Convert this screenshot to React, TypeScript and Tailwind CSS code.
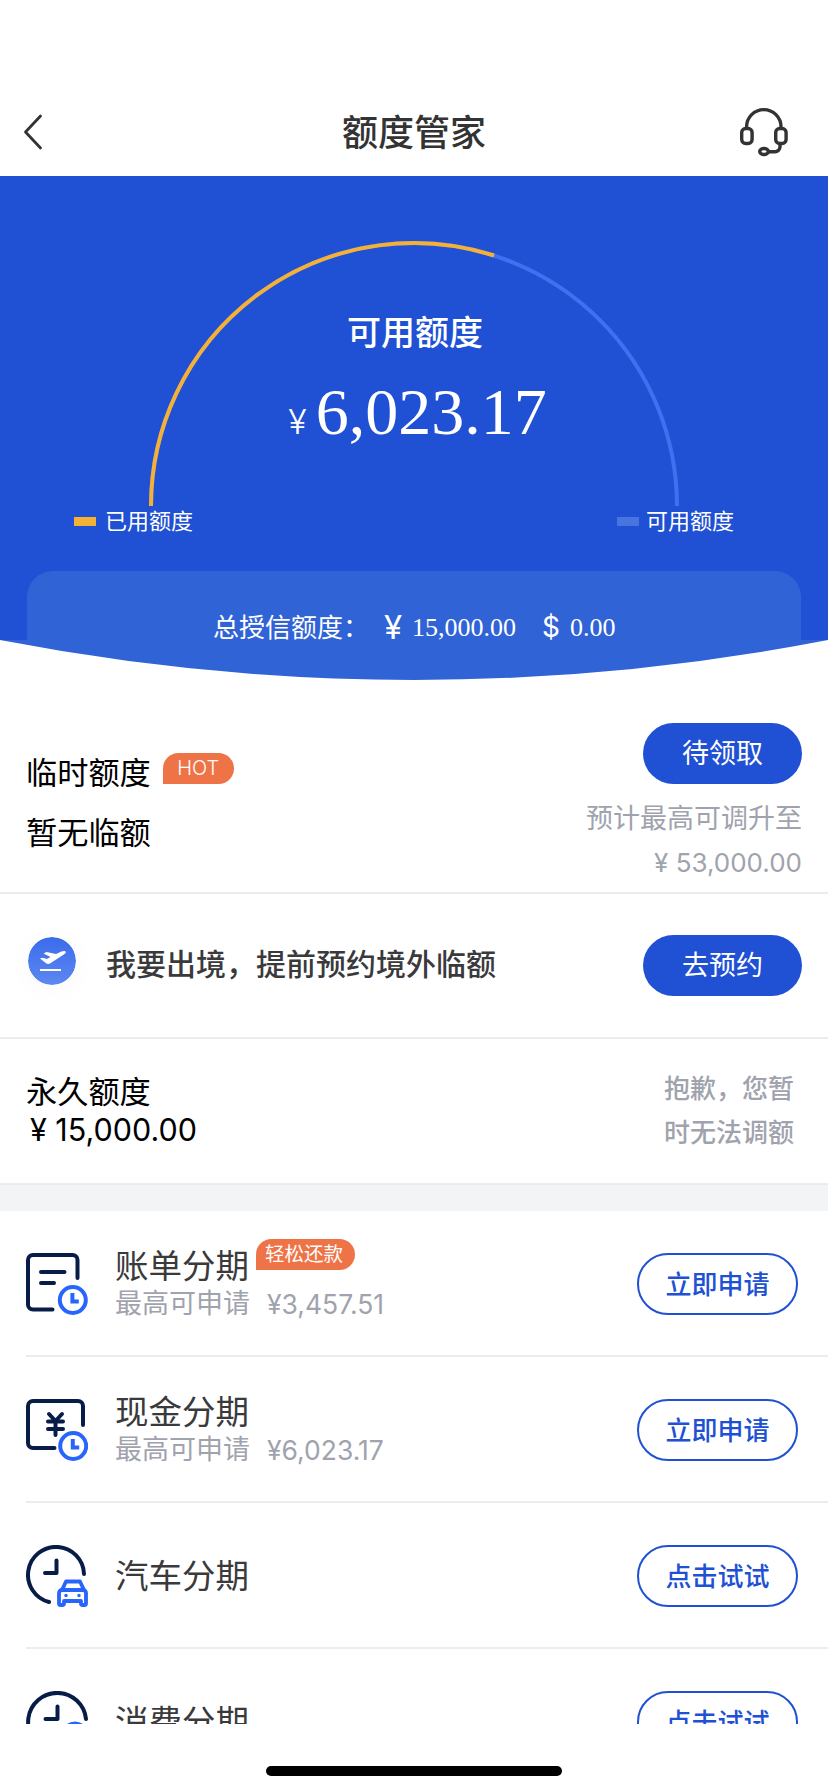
import React from 'react';

type Product = {
    name: string;
    amount?: string;
    tag?: string;
    action: string;
    icon: React.ReactNode;
};

const NAVY = '#081c48';
const BLUE = '#2865fb';

const MiniClock: React.FC<{ cx: number; cy: number }> = ({ cx, cy }) => (
    <g stroke={BLUE} strokeWidth="4" fill="none">
        <circle cx={cx} cy={cy} r="13" />
        <path d={`M${cx - 0.4} ${cy - 7}v8.4h6.4`} />
    </g>
);

const BillIcon: React.FC = () => (
    <svg className="h-[62px] w-[62px]" viewBox="0 0 62 62" fill="none">
        <g stroke={NAVY} strokeWidth="4" strokeLinecap="round" strokeLinejoin="round">
            <path d="M51.5 25V7a5 5 0 0 0-5-5H7a5 5 0 0 0-5 5v44.5a5 5 0 0 0 5 5h19.5" />
            <path d="M15 19h23.5M15 30h13" />
        </g>
        <MiniClock cx={46.8} cy={47} />
    </svg>
);

const CashIcon: React.FC = () => (
    <svg className="h-[62px] w-[62px]" viewBox="0 0 62 62" fill="none">
        <g stroke={NAVY} strokeWidth="4" strokeLinecap="round" strokeLinejoin="round">
            <path d="M57 26V7a5 5 0 0 0-5-5H7a5 5 0 0 0-5 5v37a5 5 0 0 0 5 5h21.5" />
            <path d="M23 15l6.5 7 6.5-7M22 22.5h15M22 30h15M29.500 22.5v13.5" />
        </g>
        <MiniClock cx={47.2} cy={47} />
    </svg>
);

const CarIcon: React.FC = () => (
    <svg className="h-[62px] w-[62px]" viewBox="0 0 62 62" fill="none">
        <g stroke={NAVY} strokeWidth="4" strokeLinecap="round" strokeLinejoin="round">
            <path d="M58 29A28 28 0 1 0 23 57" />
            <path d="M30.5 15.5v12.5h-11.5" />
        </g>
        <g stroke={BLUE} strokeWidth="3.8" strokeLinejoin="round">
            <path d="M36 45l4-8.500h14l4 8.500" />
            <path d="M36 45h21a3 3 0 0 1 3 3v10.500a1.500 1.500 0 0 1-1.500 1.500h-2a1.500 1.500 0 0 1-1.500-1.500v-2.500h-17v2.500a1.500 1.500 0 0 1-1.500 1.500h-2a1.500 1.500 0 0 1-1.500-1.500v-10.500a3 3 0 0 1 3-3z" />
        </g>
        <circle cx="40" cy="50.5" r="1.700" fill={BLUE} />
        <circle cx="53" cy="50.5" r="1.700" fill={BLUE} />
    </svg>
);

const ConsumeIcon: React.FC = () => (
    <svg className="h-[62px] w-[62px]" viewBox="0 0 62 62" fill="none">
        <g stroke={NAVY} strokeWidth="4" strokeLinecap="round" strokeLinejoin="round">
            <path d="M60 28A29 29 0 1 0 24 59" />
            <path d="M31.5 15.5v12.5h-12" />
        </g>
        <circle cx="49" cy="44.5" r="12" stroke={BLUE} strokeWidth="4" />
    </svg>
);

const products: Product[] = [
    { name: '账单分期', amount: '¥3,457.51', tag: '轻松还款', action: '立即申请', icon: <BillIcon /> },
    { name: '现金分期', amount: '¥6,023.17', action: '立即申请', icon: <CashIcon /> },
    { name: '汽车分期', action: '点击试试', icon: <CarIcon /> },
    { name: '消费分期', action: '点击试试', icon: <ConsumeIcon /> },
];

const Header: React.FC = () => (
    <header className="flex h-[176px] shrink-0 items-end justify-between pr-[38px] pb-[18px] pl-[22px]">
        <div className="flex h-[52px] w-[52px] items-center">
            <svg className="h-[38px] w-[22px]" viewBox="0 0 22 38" fill="none" stroke="#333" strokeWidth="2.8" strokeLinecap="round" strokeLinejoin="round">
                <path d="M18.5 3L3.500 19l15 16" />
            </svg>
        </div>
        <h1 className="-mb-px pl-4 text-[36px] leading-[52px] font-medium text-[#333]">额度管家</h1>
        <svg className="h-[52px] w-[52px]" viewBox="0 0 52 52" fill="none" stroke="#333" strokeWidth="3.4">
            <path d="M8.600 22v-1.200a17.200 17.200 0 0 1 34.400 0v1.200" />
            <rect x="3.700" y="22.500" width="10.400" height="15" rx="4" />
            <rect x="37.700" y="22.500" width="10.400" height="15" rx="4" />
            <path d="M42 38v2.700a5 5 0 0 1-5 5H30.500" />
            <ellipse cx="26" cy="45.500" rx="4.300" ry="3" />
        </svg>
    </header>
);

const QuotaPanel: React.FC = () => (
    <section className="flex h-[464px] shrink-0 flex-col bg-[#2050d3] text-white">
        <div className="relative h-[395px] shrink-0">
            <svg className="absolute inset-0 h-[395px] w-[828px]" viewBox="0 0 828 395" fill="none" strokeWidth="4">
                <path d="M151 330A263 263 0 0 1 677 330" stroke="#4070f0" />
                <path d="M151 330A263 263 0 0 1 494 79.500" stroke="#f4b136" />
            </svg>
            <div className="relative flex flex-col items-center pt-[132px]">
                <div className="pl-[2px] text-[34px] leading-[50px] font-medium">可用额度</div>
                <div className="mt-[15px] flex h-[78px] items-baseline gap-[9px] pl-[7px]">
                    <span className="font-['Inter'] text-[34px] font-light">¥</span>
                    <span className="font-['Liberation_Serif'] text-[66px] leading-[78px]">6,023.17</span>
                </div>
            </div>
            <div className="relative mt-[53px] flex h-[34px] items-center justify-between pr-[94px] pl-[74px] text-[22px] leading-[34px]">
                <div className="flex items-center gap-[9px]">
                    <i className="h-[9px] w-[22px] bg-[#f4b136]" />
                    已用额度
                </div>
                <div className="flex items-center gap-[7px]">
                    <i className="h-[9px] w-[22px] bg-[#4676dd]" />
                    可用额度
                </div>
            </div>
        </div>
        <div className="mx-[27px] flex flex-1 items-center rounded-t-[26px] bg-[#3063d6] pt-[41px] pl-[186px] text-[26px] leading-[30px] whitespace-nowrap">
            <span className="w-[171px]">总授信额度：</span>
            <span className="w-[28px] pb-[2px] font-['Inter'] text-[33px]">¥</span>
            <span className="w-[130px] font-['Liberation_Serif']">15,000.00</span>
            <span className="w-[28px] pb-[2px] font-['Inter'] text-[28px]">$</span>
            <span className="font-['Liberation_Serif']">0.00</span>
        </div>
    </section>
);

const SolidButton: React.FC<{ children: React.ReactNode }> = ({ children }) => (
    <button className="h-[61px] w-[159px] rounded-full bg-[#2050d3] pt-px text-[27px] text-white">{children}</button>
);

const ProductRow: React.FC<{ item: Product }> = ({ item }) => (
    <li className="ml-[26px] flex h-[146px] items-start border-b-2 border-[#ececec] pt-[42px] pr-[30px]">
        {item.icon}
        <div className="ml-[27px] flex-1">
            <div className={item.amount ? '-mt-1 flex h-[33px] items-center' : 'flex h-[62px] items-center'}>
                <span className="text-[33.5px] leading-[44px] text-[#3a3a3c]">{item.name}</span>
                {item.tag && (
                    <span className="mb-[22px] ml-[7px] h-[31px] w-[99px] rounded-full rounded-bl-none bg-[#ee7448] pr-[3px] text-center text-[19.5px] leading-[30px] text-white">
                        {item.tag}
                    </span>
                )}
            </div>
            {item.amount && (
                <div className="mt-[5px] flex gap-[17px] text-[27px] leading-[34px] text-[#9fa3ad]">
                    <span className="w-[135px] whitespace-nowrap">最高可申请</span>
                    <span className="text-[26.5px]">{item.amount}</span>
                </div>
            )}
        </div>
        <button className="h-[62px] w-[161px] rounded-full border-2 border-[#2050d3] text-[26px] font-medium text-[#2050d3]">
            {item.action}
        </button>
    </li>
);

export default function App() {
    return (
        <div className="flex h-[1792px] w-[828px] flex-col overflow-hidden bg-white font-['Inter','Noto_Sans_CJK_SC',sans-serif] text-black">
            <Header />
            <QuotaPanel />
            {/* curved bottom edge of the blue panel */}
            <svg className="h-[42px] w-[828px] shrink-0" viewBox="0 0 828 42">
                <path d="M0 0Q414 80 828 0z" fill="#3063d6" />
            </svg>

            <section className="flex h-[212px] shrink-0 justify-between border-b-2 border-[#ececec] px-[26px] pt-[41px]">
                <div className="pt-5 text-[31.2px] leading-[60px]">
                    <div className="flex">
                        临时额度
                        <span className="mt-[10px] ml-[12px] h-[31px] w-[71px] rounded-full rounded-bl-none bg-[#ee7448] text-center text-[20px] leading-[31px] font-light text-white">
                            HOT
                        </span>
                    </div>
                    <div>暂无临额</div>
                </div>
                <div className="flex flex-col items-end">
                    <SolidButton>待领取</SolidButton>
                    <p className="mt-[13px] text-right text-[27px] leading-[44px] text-[#9fa3ad]">
                        预计最高可调升至
                        <br />
                        <span className="text-[26px]">¥ 53,000.00</span>
                    </p>
                </div>
            </section>

            <section className="flex h-[145px] shrink-0 items-start border-b-2 border-[#ececec] px-[26px] pt-[41px]">
                <svg className="mt-[2px] ml-[2px] h-[48px] w-[48px] rounded-full shadow-[0_4px_28px_rgba(0,0,0,0.03)]" viewBox="0 0 48 48">
                    <defs>
                        <linearGradient id="plane" x1="0" y1="0" x2="0" y2="1">
                            <stop offset="0" stopColor="#3b6bea" />
                            <stop offset="1" stopColor="#5d88f2" />
                        </linearGradient>
                    </defs>
                    <circle cx="24" cy="24" r="24" fill="url(#plane)" />
                    <path d="M12 21.500l2.500-.800 4.500 1.200 3.500-1.900-7-3.500 3-1.600 9.500 2.100 5.500-2.400c2-.800 3.800-.700 4.300.200.400.900-.700 1.900-2 2.600L22 26.500c-1.200.600-2.600.600-3.600 0z" fill="#fff" />
                    <path d="M12 33h21" stroke="#fff" strokeWidth="2" />
                </svg>
                <p className="ml-[30px] flex-1 text-[30px] leading-[58px] font-medium text-[#3a3a3c]">我要出境，提前预约境外临额</p>
                <SolidButton>去预约</SolidButton>
            </section>

            <section className="flex h-[144px] shrink-0 justify-between px-[26px] pt-[28px]">
                <div className="pt-[6px] text-[31.2px] leading-[38px]">
                    <div>永久额度</div>
                    <div className="pl-1 text-[30.500px]">¥ 15,000.00</div>
                </div>
                <p className="w-[138px] text-[26px] leading-[44px] font-medium text-[#9fa3ad]">抱歉，您暂时无法调额</p>
            </section>

            <div className="h-[28px] shrink-0 border-t-2 border-[#ececec] bg-[#f3f4f6]" />

            <ul className="h-[513px] shrink-0 overflow-hidden">
                {products.map((item) => (
                    <ProductRow key={item.name} item={item} />
                ))}
            </ul>

            <div className="mx-auto mt-[42px] h-[10px] w-[296px] shrink-0 rounded-full bg-black" />
        </div>
    );
}
